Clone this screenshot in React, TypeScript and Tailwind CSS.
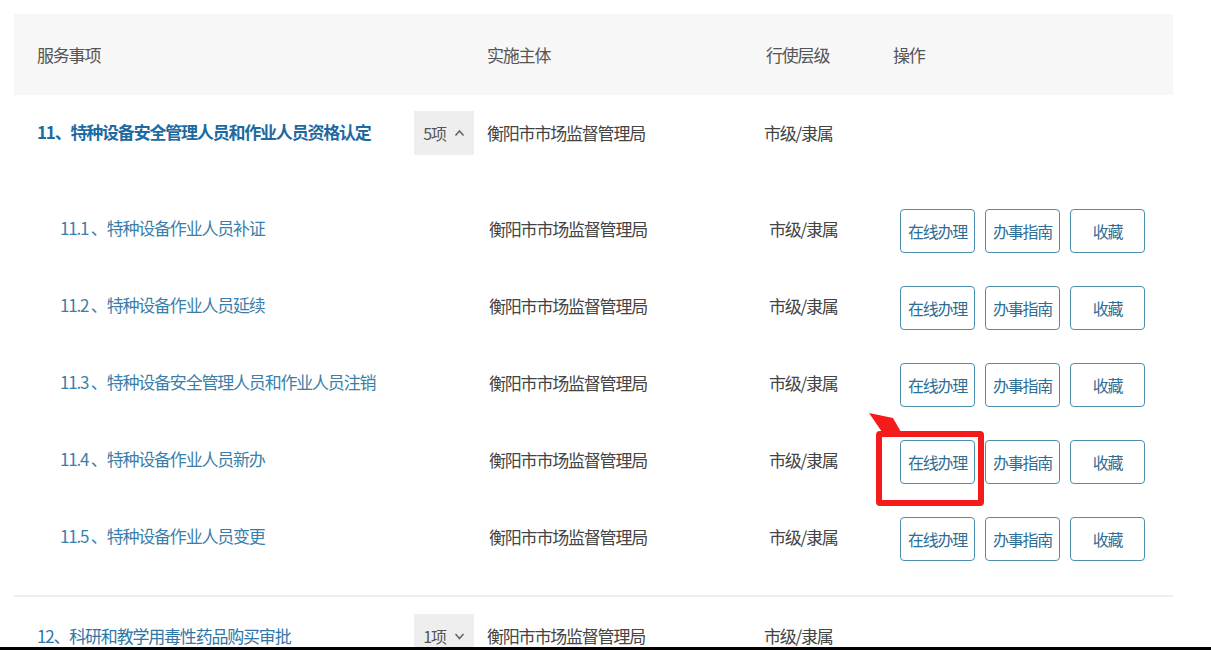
const font = { fontFamily: '"Noto Sans CJK SC", "Noto Sans", sans-serif' }

const subItems = [
  { no: '11.1', name: '特种设备作业人员补证' },
  { no: '11.2', name: '特种设备作业人员延续' },
  { no: '11.3', name: '特种设备安全管理人员和作业人员注销' },
  { no: '11.4', name: '特种设备作业人员新办', marked: true },
  { no: '11.5', name: '特种设备作业人员变更' },
]

function Chevron({ up }: { up?: boolean }) {
  return (
    <svg width="11" height="8" viewBox="0 0 11 8" className="ml-2">
      <path d={up ? 'M1.5 6.5 L5.5 2 L9.5 6.5' : 'M1.5 2 L5.5 6.5 L9.5 2'} fill="none" stroke="#666" strokeWidth="1.6" />
    </svg>
  )
}

function CountBadge({ count, up }: { count: number; up?: boolean }) {
  return (
    <div className="flex items-center justify-center w-[60px] h-[44px] bg-[#eeeeee] text-[16px] text-[#555] tracking-[-1.2px]">
      {count}项
      <Chevron up={up} />
    </div>
  )
}

function ActionButton({ label, marked }: { label: string; marked?: boolean }) {
  return (
    <div className="relative">
      <button className="w-[75px] h-[44px] border-[1.5px] border-[#4d8fae] rounded-[4px] bg-white text-[16px] text-[#2d6e96] tracking-[-1.3px]">
        {label}
      </button>
      {marked && (
        <>
          <div className="absolute -left-[24px] -right-[9px] -top-[9px] -bottom-[22px] border-[6px] border-[#f51b1b] rounded-[4px] pointer-events-none" />
          <svg className="absolute -left-[32px] -top-[28px] pointer-events-none" width="40" height="24" viewBox="0 0 40 24">
            <polygon points="1,1 25,6 33,20 14,20" fill="#f51b1b" />
          </svg>
        </>
      )}
    </div>
  )
}

export default function App() {
  return (
    <div className="w-[1211px] h-[650px] bg-white overflow-hidden flex flex-col" style={font}>
      <div className="flex-1 overflow-hidden pt-[14px] pl-[14px] w-[1173px]">
        {/* header */}
        <div className="grid grid-cols-[473px_277px_129px_1fr] h-[81px] items-center bg-[#f7f7f7] text-[17px] text-[#555] tracking-[-1.2px]">
          <div className="pl-[23px]">服务事项</div>
          <div>实施主体</div>
          <div className="pl-[2px]">行使层级</div>
          <div>操作</div>
        </div>

        {/* group 11 */}
        <div className="pt-[16px] pb-[20px] border-b-2 border-[#eeeeee]">
          <div className="grid grid-cols-[473px_277px_129px_1fr] h-[44px] items-center text-[17px] tracking-[-1.2px]">
            <div className="flex items-center justify-between pl-[23px] pr-[13px]">
              <span className="font-bold text-[#1d6aa1] -mt-[3px]">11、特种设备安全管理人员和作业人员资格认定</span>
              <CountBadge count={5} up />
            </div>
            <div className="text-[#444]">衡阳市市场监督管理局</div>
            <div className="text-[#444]">市级/隶属</div>
            <div />
          </div>

          <div className="mt-[35px]">
            {subItems.map((item) => (
              <div key={item.no} className="grid grid-cols-[473px_277px_129px_1fr] h-[77px] items-center text-[17px] tracking-[-1.2px]">
                <div className="pl-[46px] text-[#3a7fab] -mt-[2px]">{item.no} 、{item.name}</div>
                <div className="pl-[2px] text-[#444]">衡阳市市场监督管理局</div>
                <div className="pl-[5px] text-[#444]">市级/隶属</div>
                <div className="flex gap-[10px] pl-[7px] mt-[4px]">
                  <ActionButton label="在线办理" marked={item.marked} />
                  <ActionButton label="办事指南" />
                  <ActionButton label="收藏" />
                </div>
              </div>
            ))}
          </div>
        </div>

        {/* group 12 */}
        <div className="pt-[17px]">
          <div className="grid grid-cols-[473px_277px_129px_1fr] h-[44px] items-center text-[17px] tracking-[-1.2px]">
            <div className="flex items-center justify-between pl-[23px] pr-[13px]">
              <span className="text-[#2f77a8]">12、科研和教学用毒性药品购买审批</span>
              <CountBadge count={1} />
            </div>
            <div className="text-[#444]">衡阳市市场监督管理局</div>
            <div className="text-[#444]">市级/隶属</div>
            <div />
          </div>
        </div>
      </div>
      <div className="h-[3px] bg-black" />
    </div>
  )
}
